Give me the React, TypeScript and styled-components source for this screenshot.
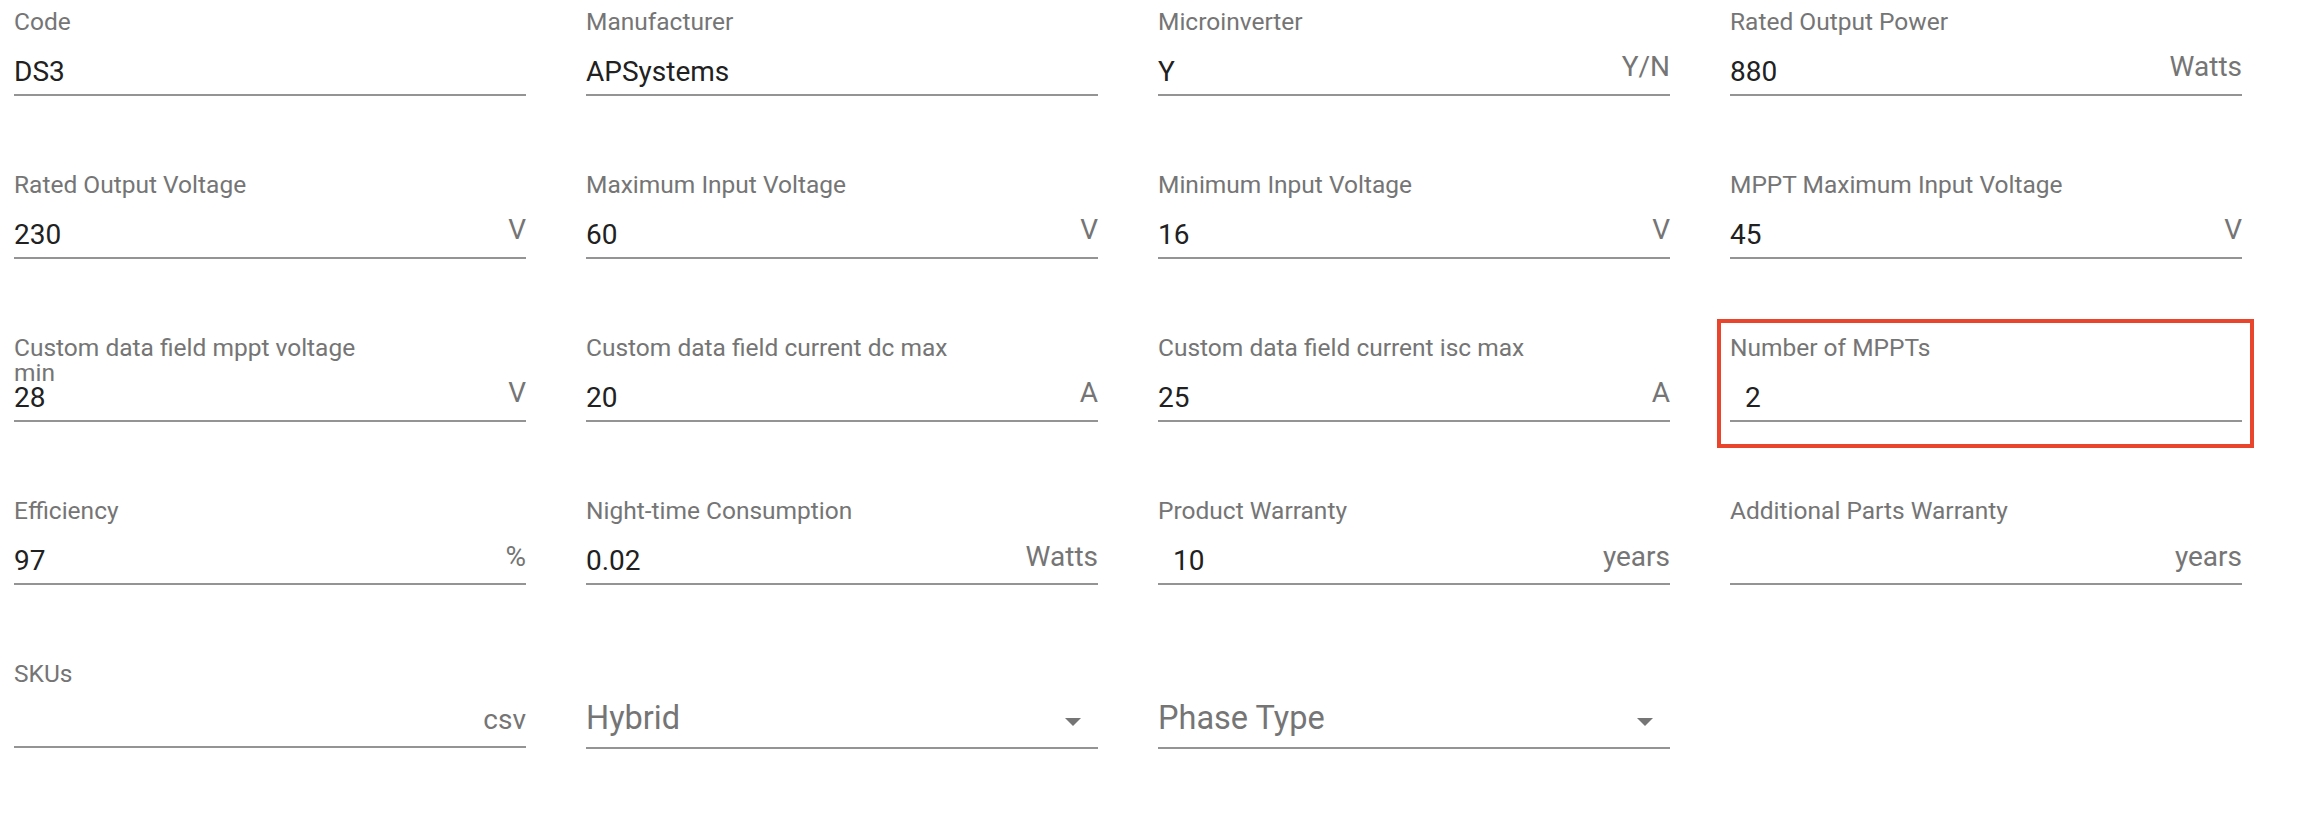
import React from 'react';
import styled, { createGlobalStyle } from 'styled-components';

const GlobalStyle = createGlobalStyle`
  html, body {
    margin: 0;
    padding: 0;
    background: #ffffff;
  }
  body {
    font-family: Roboto, "Liberation Sans", Arial, sans-serif;
  }
`;

export const FormGrid = styled.div`
  display: grid;
  grid-template-columns: repeat(4, 512px);
  grid-auto-rows: 163.2px;
  column-gap: 60px;
  padding: 1px 0 0 14px;
`;

export const Field = styled.div`
  position: relative;
  display: flex;
  flex-direction: column;
`;

export const FieldLabel = styled.label`
  display: block;
  margin-top: 7.5px;
  height: 25px;
  max-width: 375px;
  font-size: 24.5px;
  line-height: 25px;
  color: #757575;
`;

export const InputRow = styled.div<{ $tall?: boolean }>`
  display: flex;
  align-items: flex-end;
  justify-content: space-between;
  height: ${(p) => (p.$tall ? '95px' : '62px')};
  box-sizing: border-box;
  border-bottom: 2px solid #949494;
`;

export const Value = styled.span<{ $indent?: boolean }>`
  font-size: 28px;
  line-height: 32px;
  padding-bottom: 6px;
  padding-left: ${(p) => (p.$indent ? '15px' : '0')};
  color: #212121;
`;

export const Suffix = styled.span`
  font-size: 28px;
  line-height: 32px;
  padding-bottom: 10.5px;
  color: #757575;
`;

export const Placeholder = styled.span`
  font-size: 32.5px;
  line-height: 36px;
  padding-bottom: 11px;
  color: #757575;
`;

export const Caret = styled.svg`
  width: 16px;
  height: 8px;
  margin-right: 17px;
  margin-bottom: 20.5px;
  fill: #757575;
`;

export const Highlight = styled.div`
  position: absolute;
  left: -13px;
  top: -8px;
  width: 537px;
  height: 129px;
  box-sizing: border-box;
  border: 4px solid #e8452c;
  pointer-events: none;
`;

type TextFieldProps = {
  label: string;
  value?: string;
  suffix?: string;
  indent?: boolean;
  highlight?: boolean;
};

const TextField: React.FC<TextFieldProps> = ({ label, value, suffix, indent, highlight }) => (
  <Field>
    {highlight && <Highlight />}
    <FieldLabel>{label}</FieldLabel>
    <InputRow>
      <Value $indent={indent}>{value}</Value>
      {suffix && <Suffix>{suffix}</Suffix>}
    </InputRow>
  </Field>
);

const SelectField: React.FC<{ placeholder: string }> = ({ placeholder }) => (
  <Field>
    <InputRow $tall>
      <Placeholder>{placeholder}</Placeholder>
      <Caret viewBox="0 0 10 5">
        <path d="M0 0l5 5 5-5z" />
      </Caret>
    </InputRow>
  </Field>
);

export default function App() {
  return (
    <>
      <GlobalStyle />
      <FormGrid>
        <TextField label="Code" value="DS3" />
        <TextField label="Manufacturer" value="APSystems" />
        <TextField label="Microinverter" value="Y" suffix="Y/N" />
        <TextField label="Rated Output Power" value="880" suffix="Watts" />

        <TextField label="Rated Output Voltage" value="230" suffix="V" />
        <TextField label="Maximum Input Voltage" value="60" suffix="V" />
        <TextField label="Minimum Input Voltage" value="16" suffix="V" />
        <TextField label="MPPT Maximum Input Voltage" value="45" suffix="V" />

        <TextField label="Custom data field mppt voltage min" value="28" suffix="V" />
        <TextField label="Custom data field current dc max" value="20" suffix="A" />
        <TextField label="Custom data field current isc max" value="25" suffix="A" />
        <TextField label="Number of MPPTs" value="2" indent highlight />

        <TextField label="Efficiency" value="97" suffix="%" />
        <TextField label="Night-time Consumption" value="0.02" suffix="Watts" />
        <TextField label="Product Warranty" value="10" suffix="years" indent />
        <TextField label="Additional Parts Warranty" suffix="years" />

        <TextField label="SKUs" suffix="csv" />
        <SelectField placeholder="Hybrid" />
        <SelectField placeholder="Phase Type" />
        <div />
      </FormGrid>
    </>
  );
}
